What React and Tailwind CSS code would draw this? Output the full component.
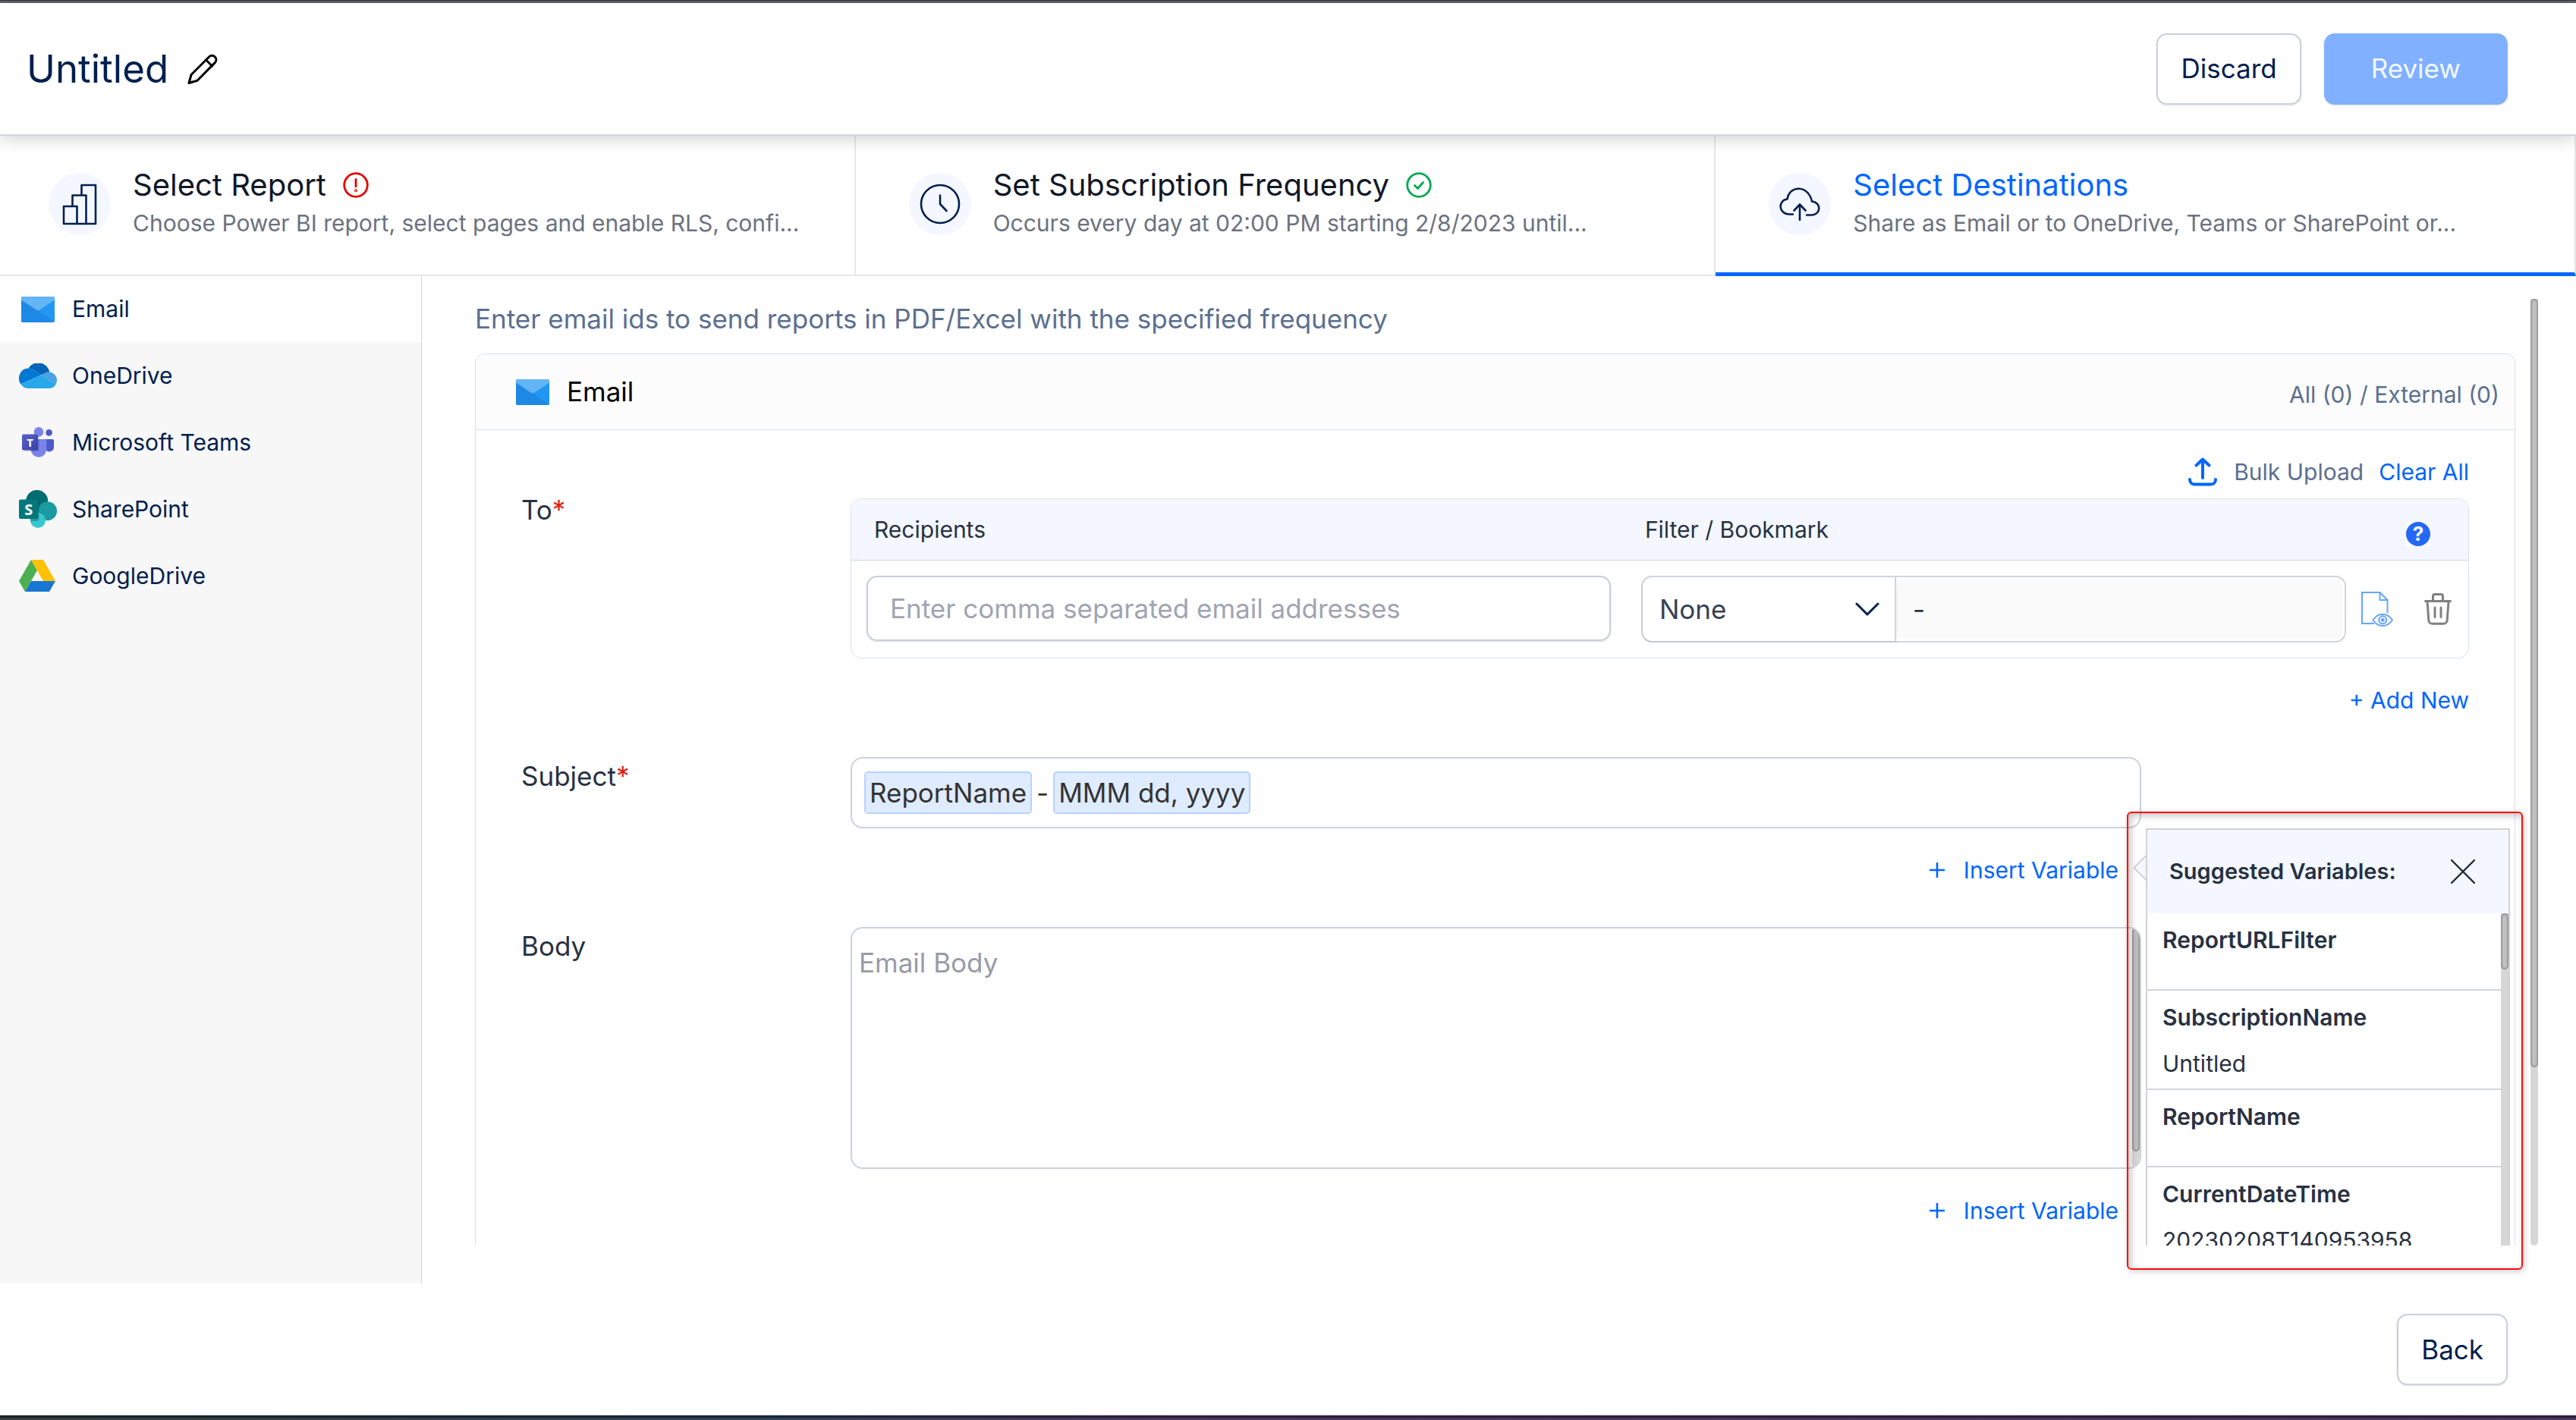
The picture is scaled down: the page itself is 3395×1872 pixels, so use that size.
import React from "react";

/* ---------- icons ---------- */

const PencilIcon = () => (
  <svg className="h-10 w-10" viewBox="0 0 40 40" fill="none" stroke="#000" strokeWidth="3" strokeLinejoin="round" strokeLinecap="round">
    <path d="M2 38.5 5 27.5 28.5 4a5.4 5.4 0 0 1 7.8 7.6L13 35.2Z" />
    <path d="m24.5 8 8 8" />
  </svg>
);

const BarsIcon = () => (
  <svg className="h-[55px] w-[46px]" viewBox="0 0 46 55" fill="none" stroke="#00204f" strokeWidth="2.6" strokeLinejoin="round">
    <path d="M2 30h17.500v23H2Z" />
    <path d="M13.500 30V15.500H31.500V53H19.500" />
    <path d="M25.500 15.500V2H44V53H31.500" />
  </svg>
);

const ClockIcon = () => (
  <svg className="h-[54px] w-[54px]" viewBox="0 0 54 54" fill="none" stroke="#00204f" strokeWidth="2.600" strokeLinecap="round" strokeLinejoin="round">
    <circle cx="27" cy="27" r="25" />
    <path d="M27 15.500V27l8.500 9" />
  </svg>
);

const CloudIcon = () => (
  <svg className="h-[44px] w-[54px]" viewBox="0 0 54 44" fill="none" stroke="#00204f" strokeWidth="2.600" strokeLinecap="round" strokeLinejoin="round">
    <path d="M18 35.500H13.500C-1.500 35.500-2 17 10.500 15.500 13-3 38.500-3.500 43 18.500 56 20 55 36.500 42 36.500H36" />
    <path d="M27 43V22.500M19.500 30.500l7.500-8 7.500 8" />
  </svg>
);

const AlertIcon = () => (
  <svg className="h-[34px] w-[34px]" viewBox="0 0 34 34" fill="none" stroke="#e60000" strokeWidth="2.800" strokeLinecap="round">
    <circle cx="17" cy="17" r="15.300" />
    <path d="M17 9.500v9.500" />
    <circle cx="17" cy="24.300" r="0.600" />
  </svg>
);

const OkIcon = () => (
  <svg className="h-[34px] w-[34px]" viewBox="0 0 34 34" fill="none" stroke="#00a84f" strokeWidth="2.800" strokeLinecap="round" strokeLinejoin="round">
    <circle cx="17" cy="17" r="15.300" />
    <path d="m11.500 17.500 4 4 7-8" />
  </svg>
);

const MailIcon = () => (
  <svg className="h-[34px] w-11" viewBox="0 0 44 34">
    <rect width="44" height="34" rx="1.800" fill="#1e88e5" />
    <path d="M22 18.500 44 4v29.500Z" fill="#2196f3" />
    <path d="M0 4.500V1.800A1.800 1.800 0 0 1 1.800 0h40.400A1.800 1.800 0 0 1 44 1.800v2.700L24 17.800a3.500 3.500 0 0 1-4 0Z" fill="#64b5f6" />
  </svg>
);

const OneDriveIcon = () => (
  <svg className="h-[33px] w-[50px]" viewBox="0 6 32 20" preserveAspectRatio="none">
    <path fill="#0364b8" d="M12.202 11.193l6.718 4.023 4.003-1.685A6.477 6.477 0 0 1 25.500 13c.148 0 .294.007.439.016a10 10 0 0 0-18.041-3.013L8 10a7.960 7.960 0 0 1 4.202 1.193Z" />
    <path fill="#0078d4" d="M12.203 11.192A7.960 7.960 0 0 0 8 10l-.102.003A7.997 7.997 0 0 0 1.437 22.573l5.924-2.493 2.634-1.108 5.863-2.468 3.062-1.288Z" />
    <path fill="#48a3e2" d="M25.939 13.016A6.500 6.500 0 0 0 22.923 13.531l-4.003 1.685 1.161.695L23.886 18.190l1.660.994 5.677 3.400a6.500 6.500 0 0 0-5.284-9.568Z" />
    <path fill="#28a8ea" d="M25.546 19.184 23.886 18.190l-3.805-2.279-1.161-.695-3.062 1.288-5.863 2.468-2.634 1.108-5.924 2.493A7.989 7.989 0 0 0 8 26h17.500a6.498 6.498 0 0 0 5.723-3.416Z" />
  </svg>
);

const TeamsIcon = () => (
  <svg className="h-10 w-[42px]" viewBox="0 0 42 40">
    <defs>
      <linearGradient id="teams" x1="0" y1="0" x2="1" y2="1">
        <stop offset="0" stopColor="#5a62c3" />
        <stop offset="1" stopColor="#3940ab" />
      </linearGradient>
    </defs>
    <circle cx="35.600" cy="7.400" r="4.300" fill="#5059c9" />
    <path d="M30 16h10.200a1.800 1.800 0 0 1 1.800 1.800v8.700a6 6 0 0 1-12 0Z" fill="#5059c9" />
    <circle cx="22" cy="6.400" r="6.300" fill="#7b83eb" />
    <path d="M11.700 16h18.600a2 2 0 0 1 2 2v11.500a10.300 10.300 0 0 1-20.600 0Z" fill="#7b83eb" />
    <rect x="2" y="11" width="20.500" height="21" rx="2" fill="#000" opacity=".18" />
    <rect y="9.500" width="21" height="21" rx="2" fill="url(#teams)" />
    <text x="10.500" y="25.500" fontSize="15" fontWeight="700" textAnchor="middle" fill="#fff" fontFamily="Open Sans, sans-serif">T</text>
  </svg>
);

const SharePointIcon = () => (
  <svg className="h-[50px] w-[50px]" viewBox="0 0 50 50">
    <circle cx="23.700" cy="14.500" r="14.500" fill="#036c70" />
    <circle cx="37.500" cy="27.700" r="12.500" fill="#1a9ba1" />
    <circle cx="25" cy="40" r="10" fill="#37c6d0" />
    <path d="M4 14h22.500v24a3 3 0 0 1-3 3H15.200Z" fill="#000" opacity=".22" />
    <rect y="12.500" width="25.400" height="25.400" rx="2" fill="#03787c" />
    <text x="12.700" y="32.500" fontSize="20" fontWeight="700" textAnchor="middle" fill="#fff" fontFamily="Open Sans, sans-serif">S</text>
  </svg>
);

const DriveIcon = () => (
  <svg className="mr-0.5 h-[42px] w-12" viewBox="0 0 48 42">
    <path d="M16 0 24 14 8 42 0 28Z" fill="#4caf50" />
    <path d="M16 0H32L48 28H32Z" fill="#ffc107" />
    <path d="M16 28H48L40 42H8Z" fill="#1976d2" />
  </svg>
);

const UploadIcon = () => (
  <svg className="h-[38px] w-[38px]" viewBox="0 0 38 38" fill="none" stroke="#0066ff" strokeWidth="4" strokeLinecap="round" strokeLinejoin="round">
    <path d="M19 27V3M10.500 10.500 19 2.500l8.500 8" />
    <path d="M2 29c0 4 2.500 6.500 6 6.500h22c3.500 0 6-2.500 6-6.500" />
  </svg>
);

const ChevronIcon = () => (
  <svg className="h-[18px] w-8" viewBox="0 0 32 18" fill="none" stroke="#00204f" strokeWidth="3" strokeLinecap="round" strokeLinejoin="round">
    <path d="M2 2l14 14L30 2" />
  </svg>
);

const DocEyeIcon = () => (
  <svg className="h-[46px] w-[42px]" viewBox="0 0 42 46" fill="none" stroke="#66a3ff" strokeWidth="2">
    <path d="M17 42H1V1h23.500L34.500 11v17" />
    <path d="M24.500 1v10h10" />
    <path d="M15.500 37.500C22 27 34 27 41 37.500 34 47.500 22 47.500 15.500 37.500Z" />
    <circle cx="28.200" cy="37.200" r="5" />
    <circle cx="28.200" cy="37.200" r="1.500" fill="#66a3ff" />
  </svg>
);

const TrashIcon = () => (
  <svg className="h-[42px] w-9" viewBox="0 0 36 42" fill="none" stroke="#808080" strokeWidth="3" strokeLinecap="round" strokeLinejoin="round">
    <path d="M1.500 10.500h33" />
    <path d="M11.500 10V4a2.500 2.500 0 0 1 2.500-2.500h8A2.500 2.500 0 0 1 24.500 4v6" />
    <path d="m4 11 1.800 24.500a5 5 0 0 0 5 4.800h14.400a5 5 0 0 0 5-4.800L32 11" />
    <path d="M14 19v12.500M22 19v12.500" />
  </svg>
);

const PlusIcon = () => (
  <svg className="h-5 w-5" viewBox="0 0 20 20" fill="none" stroke="#0066ff" strokeWidth="2.600">
    <path d="M10 0v20M0 10h20" />
  </svg>
);

const CloseIcon = () => (
  <svg className="h-8 w-8" viewBox="0 0 32 32" fill="none" stroke="#1f2937" strokeWidth="2.400" strokeLinecap="round">
    <path d="M1 1l30 30M31 1 1 31" />
  </svg>
);

/* ---------- shared pieces ---------- */

function ScrollTrack({ thumb }) {
  return (
    <div className="w-2.5 shrink-0 rounded-b-full bg-[#d6d6d6]">
      <div className={`rounded-full bg-[#c1c1c1] shadow-[inset_0_0_3px_1px_rgba(0,0,0,0.35)] ${thumb}`} />
    </div>
  );
}

function Step({ icon, title, status, text, active }) {
  return (
    <button
      className={`flex h-[185px] items-center gap-[29px] border-r-2 border-r-[#e5e7eb] pl-[70px] text-left ${
        active ? "border-b-[5px] border-b-[#0066ff]" : "border-b-2 border-b-[#e5e7eb] pb-[3px]"
      }`}
    >
      <span className="flex h-[82px] w-[82px] shrink-0 items-center justify-center rounded-full bg-[#f4f7ff]">{icon}</span>
      <span className="flex min-w-0 flex-col pb-1.5">
        <span className={`flex items-center gap-[22px] text-[40px] leading-[56px] ${active ? "text-[#0066ff]" : "text-[#111827]"}`}>
          {title}
          {status}
        </span>
        <span className="truncate text-[30px] leading-[44px] text-[#6b7280]">{text}</span>
      </span>
    </button>
  );
}

const destinations = [
  { name: "Email", icon: <MailIcon />, active: true },
  { name: "OneDrive", icon: <OneDriveIcon /> },
  { name: "Microsoft Teams", icon: <TeamsIcon /> },
  { name: "SharePoint", icon: <SharePointIcon /> },
  { name: "GoogleDrive", icon: <DriveIcon /> },
];

const variables = [
  { name: "ReportURLFilter", value: "" },
  { name: "SubscriptionName", value: "Untitled" },
  { name: "ReportName", value: "" },
  { name: "CurrentDateTime", value: "20230208T140953958" },
];

function FieldRow({ label, htmlFor, required, className = "", labelClass = "", children }) {
  return (
    <div className={`flex items-start ${className}`}>
      <label htmlFor={htmlFor} className={`w-[434px] shrink-0 text-[35px] leading-[50px] text-[#273142] ${labelClass}`}>
        {label}
        {required && <span className="text-[#e11d1d]">*</span>}
      </label>
      <div className="min-w-0 flex-1">{children}</div>
    </div>
  );
}

function InsertVariable({ children }) {
  return (
    <div className="relative mt-[30px] flex justify-end pr-[30px]">
      <button className="flex items-center gap-[25px] text-[30px] leading-[50px] text-[#0066ff]">
        <PlusIcon />
        Insert Variable
      </button>
      {children}
    </div>
  );
}

function SuggestedVariables() {
  return (
    <div className="absolute -top-[30px] left-full ml-1.5 w-[480px]">
      <div className="absolute top-10 -left-3 h-6 w-6 rotate-45 border-2 border-[#d2d2d2] bg-[#f4f7ff]" />
      <section className="relative border-2 border-[#d2d2d2] bg-white">
        <div className="flex h-[110px] items-center justify-between bg-[#f4f7ff] pr-11 pl-[29px]">
          <h2 className="text-[29px] font-semibold text-[#273142]">Suggested Variables:</h2>
          <button aria-label="Close">
            <CloseIcon />
          </button>
        </div>
        <div className="flex h-[560px]">
          <ul className="flex-1">
            {variables.map((v) => (
              <li key={v.name} className="flex min-h-[102px] flex-col gap-[17px] border-b-2 border-[#d1d5db] pt-[13px] pb-[11px] pl-5 leading-[44px] text-[#273142]">
                <span className="text-[30px] font-semibold">{v.name}</span>
                {v.value && <span className="text-[30px]">{v.value}</span>}
              </li>
            ))}
          </ul>
          <ScrollTrack thumb="h-[74px]" />
        </div>
      </section>
    </div>
  );
}

/* ---------- page ---------- */

export default function App() {
  return (
    <div className="flex h-screen flex-col overflow-hidden bg-white font-['Inter',sans-serif] text-[#00204f]">
      <div className="h-1 shrink-0 border-t border-[#34363f] bg-[#606268]" />

      <header className="relative z-10 flex h-[175px] shrink-0 items-center justify-between border-b-2 border-[#d1d5db] bg-white pr-[90px] pl-[35px] shadow-[0_4px_20px_rgba(0,0,0,0.18)]">
        <div className="flex items-center gap-[25px]">
          <h1 className="text-[51px] leading-[64px]">Untitled</h1>
          <button aria-label="Rename">
            <PencilIcon />
          </button>
        </div>
        <div className="flex items-center gap-[30px] text-[35px]">
          <button className="h-[94px] rounded-[14px] border-2 border-[#cbd0dc] bg-white px-[30px] shadow-sm">Discard</button>
          <button className="h-[94px] rounded-[14px] bg-[#80b0ff] px-[62px] text-[#f2f7ff] shadow-sm">Review</button>
        </div>
      </header>

      <nav className="-ml-1.5 grid shrink-0 grid-cols-3">
        <Step icon={<BarsIcon />} title="Select Report" status={<AlertIcon />} text="Choose Power BI report, select pages and enable RLS, confi..." />
        <Step icon={<ClockIcon />} title="Set Subscription Frequency" status={<OkIcon />} text="Occurs every day at 02:00 PM starting 2/8/2023 until..." />
        <Step icon={<CloudIcon />} title="Select Destinations" text="Share as Email or to OneDrive, Teams or SharePoint or..." active />
      </nav>

      <div className="flex min-h-0 flex-1">
        <aside className="w-[556px] shrink-0 border-r border-[#d1d5db] bg-[#f7f7f7]">
          {destinations.map((d) => (
            <button key={d.name} className={`flex w-full items-center gap-5 pl-[25px] text-[30px] ${d.active ? "h-[87px] bg-white" : "h-[88px]"}`}>
              <span className="flex w-[50px] justify-center">{d.icon}</span>
              {d.name}
            </button>
          ))}
        </aside>

        <main className="relative flex min-w-0 flex-1 pt-[30px] pr-[50px] pb-[50px] pl-[70px]">
          <div className="min-w-0 flex-1 overflow-hidden pr-5">
            <p className="text-[35px] leading-[52px] text-[#5b6f90]">Enter email ids to send reports in PDF/Excel with the specified frequency</p>

            <section className="mt-5 rounded-xl border border-[#d8e0ea] pb-20">
              <div className="flex h-[100px] items-center justify-between rounded-t-xl border-b border-[#d8e0ea] bg-[#fcfcfc] pr-5 pl-[53px]">
                <div className="flex items-center gap-[23px]">
                  <MailIcon />
                  <h2 className="text-[35px] text-black">Email</h2>
                </div>
                <span className="pt-2 text-[30px] text-[#5b6f90]">All (0) / External (0)</span>
              </div>

              <div className="pt-[30px] pr-[60px] pl-[60px]">
                <div className="mb-2.5 flex items-center justify-end gap-5 text-[30px] leading-[50px]">
                  <button className="flex items-center gap-[22px] text-[#5b6f90]">
                    <UploadIcon />
                    Bulk Upload
                  </button>
                  <button className="text-[#0066ff]">Clear All</button>
                </div>

                <FieldRow label="To" htmlFor="recipients" required labelClass="-mt-2.5">
                  <div className="overflow-hidden rounded-[14px] border border-[#d8e0ea]">
                    <table className="w-full table-fixed border-separate border-spacing-0">
                      <thead className="text-left text-[30px] text-[#273142]">
                        <tr className="bg-[#f4f7ff]">
                          <th className="h-[81px] w-[48%] border-b border-[#ced4de] p-0 pl-[30px] font-normal">Recipients</th>
                          <th className="h-[81px] border-b border-[#ced4de] p-0 pr-[50px] pl-[23px] font-normal">
                            <div className="flex items-center justify-between">
                              Filter / Bookmark
                              <span className="mt-3 bg-white">
                                <button aria-label="Help" className="flex h-8 w-8 items-center justify-center rounded-full bg-[#2469f6] text-[26px] leading-8 font-bold text-white">
                                  ?
                                </button>
                              </span>
                            </div>
                          </th>
                        </tr>
                      </thead>
                      <tbody>
                        <tr>
                          <td className="py-5 pr-[22px] pl-5 align-top">
                            <input
                              id="recipients"
                              className="block h-[86px] w-full rounded-[14px] border-2 border-[#c7ced9] px-[29px] text-[35px] shadow-sm placeholder:text-[#9fa5b2]"
                              placeholder="Enter comma separated email addresses"
                            />
                          </td>
                          <td className="py-5 pr-[22px] pl-[18px] align-top">
                            <div className="flex items-center">
                              <div className="flex h-[88px] min-w-0 flex-1 rounded-[14px] border-2 border-[#d1d5db]">
                                <div className="relative w-[334px] shrink-0 rounded-l-xl border-r-2 border-[#d1d5db] shadow-sm">
                                  <select aria-label="Filter type" className="h-full w-full appearance-none bg-transparent pl-[22px] text-[35px] text-[#374151]">
                                    <option>None</option>
                                  </select>
                                  <span className="pointer-events-none absolute inset-y-0 right-5 flex items-center">
                                    <ChevronIcon />
                                  </span>
                                </div>
                                <div className="min-w-0 flex-1 p-0.5 pl-0">
                                  <input aria-label="Filter value" disabled value="-" readOnly className="h-full w-full rounded-xl bg-[#fafafa] pl-[22px] text-[35px] text-[#273142]" />
                                </div>
                              </div>
                              <button aria-label="Preview" className="ml-5">
                                <DocEyeIcon />
                              </button>
                              <button aria-label="Delete" className="ml-[41px]">
                                <TrashIcon />
                              </button>
                            </div>
                          </td>
                        </tr>
                      </tbody>
                    </table>
                  </div>
                  <div className="mt-[30px] flex justify-end">
                    <button className="text-[30px] leading-[50px] text-[#0066ff]">+ Add New</button>
                  </div>
                </FieldRow>

                <FieldRow label="Subject" required className="mt-[50px]">
                  <div className="w-full max-w-[1701px]">
                    <div className="flex h-[94px] items-center rounded-2xl border-2 border-[#ccd1de] px-4 text-[35px] whitespace-pre text-[#333]">
                      <span className="rounded-[5px] border-2 border-[#b5d3ff] bg-[#dfebff] px-[5px] leading-[52px]">ReportName</span>
                      <span className="px-1.5">-</span>
                      <span className="rounded-[5px] border-2 border-[#b5d3ff] bg-[#dfebff] px-[5px] leading-[52px]">MMM dd, yyyy</span>
                    </div>
                    <InsertVariable>
                      <SuggestedVariables />
                    </InsertVariable>
                  </div>
                </FieldRow>

                <FieldRow label="Body" htmlFor="body" className="mt-[50px]">
                  <div className="w-full max-w-[1701px]">
                    <div className="flex h-[319px] overflow-hidden rounded-2xl border-2 border-[#ccd1de]">
                      <textarea
                        id="body"
                        placeholder="Email Body"
                        className="h-full min-w-0 flex-1 resize-none pt-5 pl-[9px] text-[35px] leading-[50px] placeholder:text-[#959ba8]"
                      />
                      <ScrollTrack thumb="h-[294px]" />
                    </div>
                    <InsertVariable />
                  </div>
                </FieldRow>
              </div>
            </section>
          </div>
          <ScrollTrack thumb="h-[1013px]" />

          <div className="pointer-events-none absolute right-[70px] bottom-[18px] h-[604px] w-[522px] rounded-md border-2 border-[#ff0a0a] shadow-[2px_2px_8px_rgba(0,0,0,0.2),inset_3px_3px_10px_rgba(0,0,0,0.25)]" />
        </main>
      </div>

      <footer className="flex shrink-0 justify-end pt-10 pr-[90px] pb-[39px]">
        <button className="h-[94px] rounded-[14px] border-2 border-[#cbd0dc] bg-white px-[30px] text-[35px] shadow-sm">Back</button>
      </footer>
      <div className="h-[7px] shrink-0 border-t border-[#c8cbcd] bg-linear-to-b from-[#464b50] from-50% to-transparent to-50%">
        <div className="h-full bg-linear-to-r from-[#101c1c]/85 via-[#0f2036]/85 via-30% to-[#2a1540]/85 to-45%" />
      </div>
    </div>
  );
}
